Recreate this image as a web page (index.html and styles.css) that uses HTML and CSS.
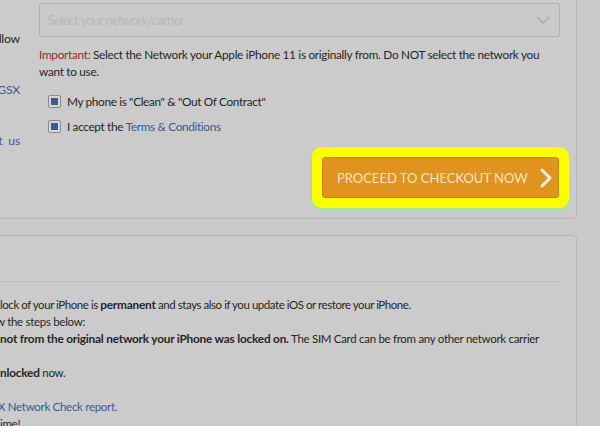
FILE: index.html
```html
<!DOCTYPE html>
<html lang="en">
<head>
<meta charset="utf-8">
<title>Checkout</title>
<link rel="stylesheet" href="styles.css">
</head>
<body>
<div class="page">
  <section class="card card-form">
    <div class="sidebar">
      <div class="sb-line"></div>
      <div class="sb-line"></div>
      <div class="sb-line sb-end">llow</div>
      <div class="sb-line"></div>
      <div class="sb-line"></div>
      <div class="sb-line sb-end link">GSX</div>
      <div class="sb-line"></div>
      <div class="sb-line"></div>
      <div class="sb-line sb-end link">t&nbsp; us</div>
    </div>
    <div class="form">
      <div class="select">
        <span class="placeholder">Select your network/carrier</span>
        <svg class="select-caret" width="14" height="8" viewBox="0 0 14 8"><polyline points="1,1 7,7 13,1" fill="none" stroke="#aeaeae" stroke-width="1.6"/></svg>
      </div>
      <p class="important"><span class="imp-label">Important:</span> Select the Network your Apple iPhone 11 is originally from. Do NOT select the network you want to use.</p>
      <label class="check"><span class="box"><span class="tick"></span></span>My phone is "Clean" &amp; "Out Of Contract"</label>
      <label class="check"><span class="box"><span class="tick"></span></span>I accept the&nbsp;<a class="link">Terms &amp; Conditions</a></label>
      <div class="actions">
        <button class="btn-checkout"><span class="btn-label">PROCEED TO CHECKOUT NOW</span>
          <svg width="12" height="20" viewBox="0 0 12 20"><polyline points="2,2 10,10 2,18" fill="none" stroke="#fbf1dd" stroke-width="3" stroke-linecap="round" stroke-linejoin="round"/></svg>
        </button>
      </div>
    </div>
  </section>
  <section class="card card-info">
    <div class="card-head"></div>
    <div class="card-body">
      <div class="line line-tight">lock of your iPhone is <b>permanent</b> and stays also if you update iOS or restore your iPhone.</div>
      <div class="line"><span class="cut">w</span> the steps below:</div>
      <div class="line"><b>not from the original network your iPhone was locked on.</b> The SIM Card can be from any other network carrier</div>
      <div class="line"></div>
      <div class="line"><b>nlocked</b> now.</div>
      <div class="line"></div>
      <div class="line link"><span class="cut-sm">X</span> Network Check report.</div>
      <div class="line">ime!</div>
    </div>
  </section>
</div>
</body>
</html>
```

FILE: styles.css
```css
html, body {
  margin: 0;
  padding: 0;
}
body {
  background: #c9c9c9;
  overflow: hidden;
  font-family: Lato, "Open Sans", sans-serif;
  font-size: 12px;
  line-height: 17px;
  color: #262626;
}
.page {
  width: 607px;
  margin: -20px 0 0 -30px;
}
.card {
  background: #cbcbcb;
  border: 1px solid #b6b6b6;
  border-radius: 4px;
  box-sizing: border-box;
}
.card-form {
  display: grid;
  grid-template-columns: 39px 1fr;
  column-gap: 19px;
  padding: 15px 16px 20px 10px;
}
.sidebar {
  display: flex;
  flex-direction: column;
  font-size: 12.2px;
  letter-spacing: -0.2px;
}
.sb-line {
  height: 17px;
  white-space: nowrap;
}
.sb-end {
  text-align: right;
}
.link {
  color: #3a5896;
}
.form {
  display: flex;
  flex-direction: column;
}
.select {
  margin-top: 7px;
  height: 34px;
  box-sizing: border-box;
  border: 1px solid #b2b2b2;
  border-radius: 3px;
  background: #cacaca;
  display: flex;
  align-items: center;
  justify-content: space-between;
  padding: 0 9px 0 8px;
}
.placeholder {
  font-size: 12.4px;
  letter-spacing: -0.5px;
  color: #b7b7b7;
}
.important {
  margin: 9px 0 0;
  font-size: 11.8px;
  letter-spacing: -0.3px;
}
.imp-label {
  color: #8c2f2f;
}
.check {
  display: flex;
  align-items: center;
  height: 20px;
  margin-top: 5px;
  padding-left: 9px;
  font-size: 11.8px;
  letter-spacing: -0.35px;
}
.important + .check {
  margin-top: 11px;
}
.box {
  width: 13px;
  height: 13px;
  box-sizing: border-box;
  border: 1px solid #8a8a8a;
  border-radius: 2px;
  background: #d6d6d6;
  display: flex;
  align-items: center;
  justify-content: center;
  margin-right: 6px;
}
.tick {
  width: 7px;
  height: 7px;
  background: #3d5d8c;
}
.actions {
  display: flex;
  justify-content: flex-end;
  margin-top: 21px;
  padding-right: 1px;
}
.btn-checkout {
  width: 237px;
  height: 41px;
  box-sizing: border-box;
  border: 1px solid #c98418;
  border-radius: 3px;
  background: #e0931f;
  color: #f7e5c3;
  font-family: Lato, "Open Sans", sans-serif;
  font-size: 13px;
  white-space: nowrap;
  display: flex;
  align-items: center;
  padding: 0 0 0 14px;
  box-shadow: 0 0 0 10px #ffff00, 0 1px 0 11px #9ee89a;
  cursor: pointer;
}
.btn-label {
  margin-right: 12px;
}
.card-info {
  margin-top: 16px;
  height: 260px;
}
.card-head {
  height: 45px;
  margin-right: 16px;
  border-bottom: 1px solid #b9b9b9;
}
.card-body {
  padding: 14px 0 0 29px;
}
.line {
  height: 17px;
  white-space: nowrap;
  font-size: 11.5px;
  letter-spacing: -0.3px;
}
.line-tight {
  letter-spacing: -0.45px;
}
.line b {
  font-weight: 700;
  font-size: 11.8px;
  letter-spacing: -0.2px;
}
.cut {
  margin-left: -4px;
}
.cut-sm {
  margin-left: -2px;
}
```
